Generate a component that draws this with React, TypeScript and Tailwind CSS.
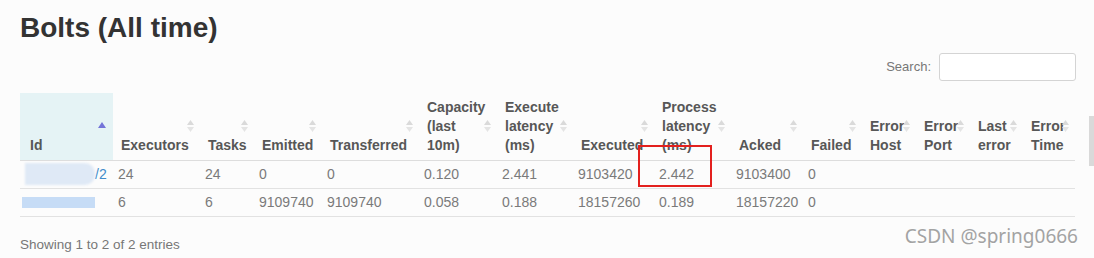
import React from "react";

type Col = { title: string[]; width: number };

const columns: Col[] = [
  { title: ["Id"], width: 93 },
  { title: ["Executors"], width: 87 },
  { title: ["Tasks"], width: 54 },
  { title: ["Emitted"], width: 68 },
  { title: ["Transferred"], width: 97 },
  { title: ["Capacity", "(last", "10m)"], width: 78 },
  { title: ["Execute", "latency", "(ms)"], width: 76 },
  { title: ["Executed"], width: 81 },
  { title: ["Process", "latency", "(ms)"], width: 77 },
  { title: ["Acked"], width: 72 },
  { title: ["Failed"], width: 59 },
  { title: ["Error", "Host"], width: 54 },
  { title: ["Error", "Port"], width: 54 },
  { title: ["Last", "error"], width: 53 },
  { title: ["Error", "Time"], width: 52 },
];

const rows = [
  ["24", "24", "0", "0", "0.120", "2.441", "9103420", "2.442", "9103400", "0", "", "", "", ""],
  ["6", "6", "9109740", "9109740", "0.058", "0.188", "18157260", "0.189", "18157220", "0", "", "", "", ""],
];

const SortBoth = () => (
  <svg width="7" height="12" viewBox="0 0 7 12" className="absolute right-[6px] top-[27px]">
    <polygon points="3.5,0 7,5 0,5" fill="#dadada" />
    <polygon points="0,7 7,7 3.5,12" fill="#e4e4e4" />
  </svg>
);

const SortAsc = () => (
  <svg width="8" height="6" viewBox="0 0 8 6" className="absolute right-[7px] top-[29px]">
    <polygon points="4,0 8,6 0,6" fill="#7474d8" />
  </svg>
);

const App = () => {
  return (
    <div className="relative h-[258px] w-[1094px] overflow-hidden bg-[#fcfcfc] font-['Liberation_Sans',Arial,sans-serif]">
      <div className="pl-5 pr-[18px]">
        <h1 className="pt-[12px] text-[28px] font-bold leading-[31px] text-[#333]">
          Bolts (All time)
        </h1>

        {/* search box */}
        <div className="mt-[10px] flex items-center justify-end">
          <label className="mr-[8px] text-[13px] text-[#777]">Search:</label>
          <input
            type="text"
            className="h-[28px] w-[137px] rounded-[3px] border border-[#d4d4d4] bg-white"
          />
        </div>

        <table className="mt-[12px] w-[1055px] table-fixed border-collapse">
          <colgroup>
            {columns.map((c, i) => (
              <col key={i} style={{ width: c.width }} />
            ))}
          </colgroup>
          <thead>
            <tr>
              {columns.map((c, i) => (
                <th
                  key={i}
                  className={`relative h-[67px] whitespace-nowrap border-b border-[#dddddd] pb-[5px] pl-[8px] text-left align-bottom text-[14px] font-bold leading-[19px] text-[#575757] ${
                    i === 0 ? "bg-[#e5f3f5] pl-[10px]" : ""
                  }`}
                >
                  {c.title.map((t, j) => (
                    <div key={j}>{t}</div>
                  ))}
                  {i === 0 ? <SortAsc /> : <SortBoth />}
                </th>
              ))}
            </tr>
          </thead>
          <tbody>
            {rows.map((r, ri) => (
              <tr key={ri}>
                <td className="h-[28px] border-b border-[#e2e2e2] pl-[5px] text-[14px] text-[#7a7a7a]">
                  {ri === 0 ? (
                    <div className="flex items-center">
                      <span className="h-[22px] w-[70px] rounded-r-[10px] bg-[#dfe9f6] blur-[1px]" />
                      <span className="text-[#428bca]">/2</span>
                    </div>
                  ) : (
                    <span className="-ml-[3px] block h-[11px] w-[73px] bg-[#c6dcf6] blur-[0.5px]" />
                  )}
                </td>
                {r.map((v, ci) => (
                  <td
                    key={ci}
                    className="h-[28px] whitespace-nowrap border-b border-[#e2e2e2] pl-[5px] text-[14px] text-[#7a7a7a]"
                  >
                    {v}
                  </td>
                ))}
              </tr>
            ))}
          </tbody>
        </table>

        <p className="mt-[18px] text-[13.5px] leading-[20px] text-[#777]">
          Showing 1 to 2 of 2 entries
        </p>
      </div>

      {/* highlight box */}
      <div className="absolute left-[638px] top-[145px] h-[42px] w-[74px] border-2 border-[#e3201e]" />

      {/* scrollbar */}
      <div className="absolute left-[1089px] top-[116px] h-[50px] w-[5px] bg-[#d9d9d9]" />

      {/* watermark */}
      <div className="absolute right-[16px] top-[224px] font-['Noto_Sans',sans-serif] text-[19px] leading-[25px] text-[#a3a3a3] [text-shadow:0_1px_1px_#fff]">
        CSDN @spring0666
      </div>
    </div>
  );
};

export default App;
